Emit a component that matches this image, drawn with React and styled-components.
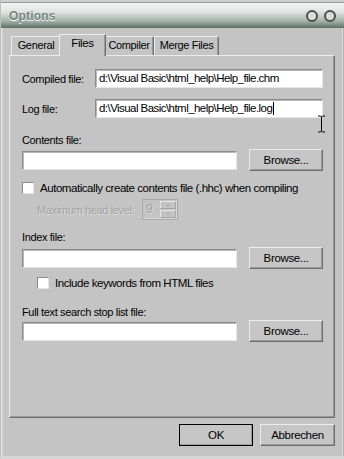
import React from 'react';
import styled, {createGlobalStyle} from 'styled-components';

const Global = createGlobalStyle`
  html, body {
    margin: 0;
    padding: 0;
    background: #c4c4c4;
  }
  * {
    box-sizing: border-box;
  }
`;

const Window = styled.div`
  width: 344px;
  height: 459px;
  display: flex;
  flex-direction: column;
  background: #c4c4c4;
  font-family: "Liberation Sans", Arial, sans-serif;
  font-size: 11px;
  letter-spacing: -0.35px;
  color: #000;
  border-left: 1px solid #bdbdbd;
  box-shadow: inset 1px 0 0 #e4e4e4, inset 2px 0 0 #d0d0d0, inset -1px 0 0 #b0b0b0, inset -2px 0 0 #e0e0e0;
  border-bottom: 3px solid #d6d6d6;
  overflow: hidden;
  position: relative;
`;

const TopStrip = styled.div`
  height: 3px;
  background: #cfcfcf;
  border-bottom: 1px solid #9a9a9a;
`;

const TitleBar = styled.div`
  height: 25px;
  display: flex;
  align-items: center;
  padding: 0 8px 0 8px;
  background: linear-gradient(to bottom, #f4f6f5 0%, #dfe4e2 35%, #a9b6b0 70%, #5d7168 100%);
`;

const Title = styled.div`
  font-weight: bold;
  font-size: 12px;
  letter-spacing: 0.2px;
  color: #76847e;
  text-shadow: 0 1px 0 #ffffff;
  flex: 1;
`;

const Knob = styled.div`
  width: 12px;
  height: 12px;
  border-radius: 50%;
  border: 2.5px solid #4a4f4d;
  background: #d9dcdb;
  margin-left: 6px;
  margin-top: 1px;
`;

const Body = styled.div`
  flex: 1;
  display: flex;
  flex-direction: column;
  padding: 7px 9px 0 8px;
`;

const TabStrip = styled.div`
  display: flex;
  align-items: flex-end;
  height: 20px;
  padding-left: 2px;
  position: relative;
  z-index: 1;
`;

const Tab = styled.div`
  height: ${p => (p.$active ? '22px' : '19px')};
  width: ${p => p.$w}px;
  margin: ${p => (p.$active ? '0 -2px -1px -2px' : '0')};
  padding-top: 2px;
  text-align: center;
  background: #c4c4c4;
  border-top: 1px solid #ececec;
  border-left: 1px solid #ececec;
  border-right: 1px solid #6e6e6e;
  box-shadow: inset -1px 0 0 #9a9a9a;
  font-size: ${p => (p.$active ? '11.5px' : '11px')};
  position: relative;
  z-index: ${p => (p.$active ? 2 : 1)};
`;

const Panel = styled.div`
  height: 363px;
  border-top: 1px solid #ececec;
  border-left: 1px solid #ececec;
  border-right: 1px solid #6e6e6e;
  border-bottom: 1px solid #6e6e6e;
  box-shadow: inset -1px -1px 0 #9a9a9a;
  padding: 13px 11px 0 12px;
  display: flex;
  flex-direction: column;
`;

const FieldRow = styled.div`
  display: flex;
  align-items: center;
  height: 18px;
  margin-top: ${p => p.$mt || 0}px;
`;

const Label = styled.div`
  width: 73px;
  flex: none;
  padding-top: 2px;
`;

const Caption = styled.div`
  height: 14px;
  line-height: 14px;
  margin-top: ${p => p.$mt || 0}px;
`;

const TextBox = styled.div`
  flex: ${p => (p.$w ? 'none' : 1)};
  width: ${p => (p.$w ? `${p.$w}px` : 'auto')};
  height: ${p => p.$h || 19}px;
  background: #fff;
  border-top: 1px solid #8a8a8a;
  border-left: 1px solid #8a8a8a;
  border-right: 1px solid #e6e6e6;
  border-bottom: 1px solid #e6e6e6;
  box-shadow: inset 1px 1px 0 #b8b8b8;
  padding: 1px 3px 0 3px;
  line-height: 15px;
  font-size: 11.5px;
  letter-spacing: -0.55px;
  white-space: nowrap;
  display: flex;
  align-items: center;
`;

const Caret = styled.span`
  display: inline-block;
  width: 1px;
  height: 13px;
  background: #000;
  margin-left: 1px;
`;

const BrowseRow = styled.div`
  display: flex;
  align-items: center;
  gap: 12px;
  height: 22px;
  margin-top: ${p => p.$mt || 0}px;
`;

const Button = styled.div`
  width: ${p => p.$w || 74}px;
  height: 22px;
  flex: none;
  display: flex;
  align-items: center;
  justify-content: center;
  background: #c6c6c6;
  font-size: 11.5px;
  border-top: 1px solid #ececec;
  border-left: 1px solid #ececec;
  border-right: 1px solid ${p => (p.$default ? '#000' : '#6e6e6e')};
  border-bottom: 1px solid ${p => (p.$default ? '#000' : '#6e6e6e')};
  outline: ${p => (p.$default ? '1px solid #000' : 'none')};
  outline-offset: -1px;
  box-shadow: inset -1px -1px 0 #9a9a9a;
`;

const CheckRow = styled.div`
  display: flex;
  align-items: center;
  height: 13px;
  margin-top: ${p => p.$mt || 0}px;
  padding-left: ${p => p.$indent || 0}px;
  gap: 6px;
  font-size: 11.5px;
  letter-spacing: -0.45px;
`;

const Box = styled.div`
  width: 12px;
  height: 12px;
  flex: none;
  background: #fff;
  border-top: 1px solid #8a8a8a;
  border-left: 1px solid #8a8a8a;
  border-right: 1px solid #e6e6e6;
  border-bottom: 1px solid #e6e6e6;
`;

const SpinRow = styled.div`
  display: flex;
  align-items: center;
  height: 21px;
  margin-top: ${p => p.$mt || 0}px;
  padding-left: 15px;
  color: #a3a3a3;
  text-shadow: 1px 1px 0 #dcdcdc;
`;

const SpinLabel = styled.div`
  width: 105px;
`;

const Spinner = styled.div`
  width: 36px;
  height: 21px;
  display: flex;
  border: 1px solid #a8a8a8;
  box-shadow: inset -1px -1px 0 #dadada;
`;

const SpinValue = styled.div`
  flex: 1;
  padding-left: 3px;
  line-height: 19px;
  font-size: 12px;
`;

const SpinButtons = styled.div`
  width: 17px;
  display: flex;
  flex-direction: column;
  padding: 1px 1px 1px 0;
  gap: 1px;
`;

const SpinBtn = styled.div`
  flex: 1;
  border-top: 1px solid #e4e4e4;
  border-left: 1px solid #e4e4e4;
  border-right: 1px solid #a4a4a4;
  border-bottom: 1px solid #a4a4a4;
  display: flex;
  align-items: center;
  justify-content: center;
  &::after {
    content: '';
    width: 0;
    height: 0;
    border-left: 2px solid transparent;
    border-right: 2px solid transparent;
    ${p => (p.$down ? 'border-top: 2px solid #a8a8a8;' : 'border-bottom: 2px solid #a8a8a8;')}
  }
`;

const Footer = styled.div`
  display: flex;
  justify-content: flex-end;
  gap: 7px;
  padding-top: 6px;
`;

const Cursor = styled.svg`
  position: absolute;
  left: 316px;
  top: 115px;
`;

const Browse = ({mt}) => (
    <BrowseRow $mt={mt}>
        <TextBox $w={215}/>
        <Button>Browse...</Button>
    </BrowseRow>
);

const App = () => {
    return (
        <>
            <Global/>
            <Window>
                <TopStrip/>
                <TitleBar>
                    <Title>Options</Title>
                    <Knob/>
                    <Knob/>
                </TitleBar>
                <Body>
                    <TabStrip>
                        <Tab $w={50}>General</Tab>
                        <Tab $w={47} $active>Files</Tab>
                        <Tab $w={50}>Compiler</Tab>
                        <Tab $w={65}>Merge Files</Tab>
                    </TabStrip>
                    <Panel>
                        <FieldRow>
                            <Label>Compiled file:</Label>
                            <TextBox>d:\Visual Basic\html_help\Help_file.chm</TextBox>
                        </FieldRow>
                        <FieldRow $mt={12}>
                            <Label>Log file:</Label>
                            <TextBox>d:\Visual Basic\html_help\Help_file.log<Caret/></TextBox>
                        </FieldRow>
                        <Caption $mt={16}>Contents file:</Caption>
                        <Browse mt={2}/>
                        <CheckRow $mt={10}>
                            <Box/>
                            <span>Automatically create contents file (.hhc) when compiling</span>
                        </CheckRow>
                        <SpinRow $mt={5}>
                            <SpinLabel>Maximum head level:</SpinLabel>
                            <Spinner>
                                <SpinValue>9</SpinValue>
                                <SpinButtons>
                                    <SpinBtn/>
                                    <SpinBtn $down/>
                                </SpinButtons>
                            </Spinner>
                        </SpinRow>
                        <Caption $mt={10}>Index file:</Caption>
                        <Browse mt={3}/>
                        <CheckRow $mt={7} $indent={15}>
                            <Box/>
                            <span>Include keywords from HTML files</span>
                        </CheckRow>
                        <Caption $mt={16}>Full text search stop list file:</Caption>
                        <Browse mt={1}/>
                    </Panel>
                    <Footer>
                        <Button $w={74} $default>OK</Button>
                        <Button $w={75}>Abbrechen</Button>
                    </Footer>
                </Body>
                <Cursor width="9" height="18" viewBox="0 0 9 18">
                    <path d="M1 1h2.5l1 1 1-1H8M4.5 2v14M1 17h2.5l1-1 1 1H8" stroke="#000" strokeWidth="1" fill="none"/>
                </Cursor>
            </Window>
        </>
    );
};

export default App;
